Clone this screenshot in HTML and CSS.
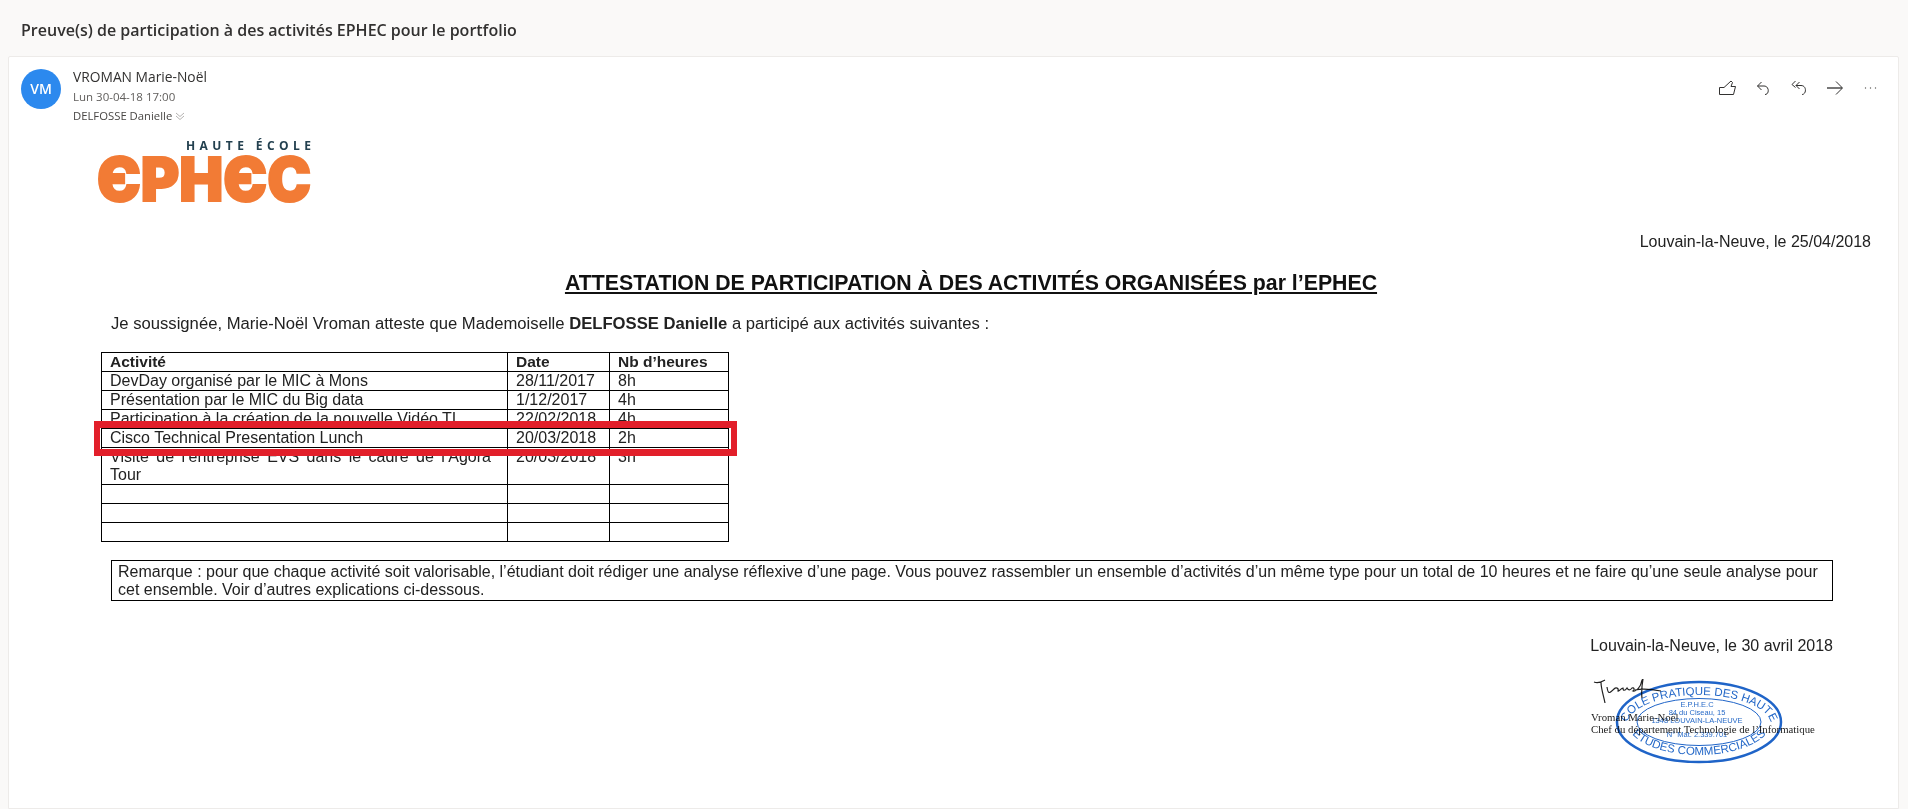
FILE: index.html
```html
<!DOCTYPE html>
<html lang="fr">
<head>
<meta charset="utf-8">
<title>Preuve(s) de participation</title>
<link rel="stylesheet" href="styles.css">
</head>
<body>
<h1 class="subject">Preuve(s) de participation à des activités EPHEC pour le portfolio</h1>
<main class="card">
  <header class="mail-head">
    <div class="avatar">VM</div>
    <div class="meta">
      <div class="sender">VROMAN Marie-Noël</div>
      <div class="date">Lun 30-04-18 17:00</div>
      <div class="to">DELFOSSE Danielle
        <svg class="chev" viewBox="0 0 10 10" width="10" height="10"><path d="M1 2l4 3.500L9 2M1 5l4 3.500L9 5"/></svg>
      </div>
    </div>
    <div class="actions">
      <svg class="icon" viewBox="0 0 17 16" width="17" height="16"><path d="M.5 7.500H5L12 1l1.500 1.500-1.500 4h4.500L14.500 14.500H.5z"/></svg>
      <svg class="icon" viewBox="0 0 14 16" width="14" height="16"><path d="M5.500 2L1.500 6l4 4M1.500 6h6.500c5.500 0 5.500 8.500 1 8.500"/></svg>
      <svg class="icon" viewBox="0 0 17 16" width="17" height="16"><path d="M5.500 1L2 4.500 5.500 7.500M9.500 2L6 5.500 9.500 9M6 5.500h5c6 0 5.500 9 1 9"/></svg>
      <svg class="icon" viewBox="0 0 16 16" width="16" height="16"><path class="fwd-line" d="M0 8h15"/><path d="M9 1.500L15.500 8 9 14.500"/></svg>
      <svg class="icon" viewBox="0 0 14 16" width="14" height="16"><circle cx="2.500" cy="8" r=".7"/><circle cx="7.500" cy="8" r=".7"/><circle cx="12.500" cy="8" r=".7"/></svg>
    </div>
  </header>

  <article class="doc">
    <svg class="logo" viewBox="0 0 216 66" width="216" height="66" role="img" aria-label="Haute École EPHEC">
      <text class="logo-top" x="89" y="10" textLength="125" lengthAdjust="spacing">HAUTE ÉCOLE</text>
      <text class="logo-main" x="0" y="61" textLength="214" lengthAdjust="spacingAndGlyphs">ЄPHЄC</text>
    </svg>

    <p class="place-top">Louvain-la-Neuve, le 25/04/2018</p>
    <h2 class="title"><u>ATTESTATION DE PARTICIPATION À DES ACTIVITÉS ORGANISÉES par l’EPHEC</u></h2>
    <p class="intro">Je soussignée, Marie-Noël Vroman atteste que Mademoiselle <b>DELFOSSE Danielle</b> a participé aux activités suivantes :</p>

    <div class="table-wrap">
      <table class="activities">
        <colgroup><col class="c1"><col class="c2"><col class="c3"></colgroup>
        <tr class="head"><th>Activité</th><th>Date</th><th>Nb d’heures</th></tr>
        <tr><td>DevDay organisé par le MIC à Mons</td><td>28/11/2017</td><td>8h</td></tr>
        <tr><td>Présentation par le MIC du Big data</td><td>1/12/2017</td><td>4h</td></tr>
        <tr><td>Participation à la création de la nouvelle Vidéo TI</td><td>22/02/2018</td><td>4h</td></tr>
        <tr><td>Cisco Technical Presentation Lunch</td><td>20/03/2018</td><td>2h</td></tr>
        <tr><td class="justify">Visite de l’entreprise EVS dans le cadre de l’Agora Tour</td><td>20/03/2018</td><td>3h</td></tr>
        <tr><td></td><td></td><td></td></tr>
        <tr><td></td><td></td><td></td></tr>
        <tr><td></td><td></td><td></td></tr>
      </table>
      <div class="highlight"></div>
    </div>

    <p class="remark">Remarque : pour que chaque activité soit valorisable, l’étudiant doit rédiger une analyse réflexive d’une page. Vous pouvez rassembler un ensemble d’activités d’un même type pour un total de 10 heures et ne faire qu’une seule analyse pour cet ensemble. Voir d’autres explications ci-dessous.</p>

    <p class="place-bottom">Louvain-la-Neuve, le 30 avril 2018</p>

    <div class="sign">
      <p class="sign-name">Vroman Marie-Noël<br>Chef du département Technologie de l’Informatique</p>
      <svg class="signature" viewBox="0 0 70 28" width="70" height="28">
        <path d="M1 3C6 5 10 2 12 1M8 3C8 10 11 18 12 24M14 8C15 15 16 15 21 10C23 8 26 9 25 12C26 13 28 9 30 9C30 12 32 12 34 9C35 11 37 12 39 9C41 8 42 11 40 12C43 13 45 10 47 7C49 4 48 1 50 0C49 6 48 12 49 19M42 11C50 9 58 10 68 12"/>
      </svg>
      <svg class="stamp" viewBox="0 0 170 86" width="170" height="86">
        <defs>
          <path id="arcTop" d="M13 46A72 30 0 0 1 157 46"/>
          <path id="arcBot" d="M13 43A72 33 0 0 0 157 43"/>
        </defs>
        <ellipse class="ring" cx="85" cy="43" rx="82" ry="40"/>
        <ellipse class="ring thin" cx="85" cy="43" rx="62" ry="23.500"/>
        <text class="stamp-big"><textPath href="#arcTop" startOffset="50%" text-anchor="middle">ECOLE PRATIQUE DES HAUTES</textPath></text>
        <text class="stamp-big"><textPath href="#arcBot" startOffset="50%" text-anchor="middle">ETUDES COMMERCIALES</textPath></text>
        <text class="stamp-small" x="83" y="28" text-anchor="middle">E.P.H.E.C</text>
        <text class="stamp-small" x="83" y="36" text-anchor="middle">84 du Ciseau, 15</text>
        <text class="stamp-small" x="83" y="44" text-anchor="middle">1348 LOUVAIN-LA-NEUVE</text>
        <text class="stamp-small" x="83" y="58" text-anchor="middle">N° Mat. 2.339.701</text>
      </svg>
    </div>
  </article>
</main>
</body>
</html>
```

FILE: styles.css
```css
* { box-sizing: border-box; }
html, body { height: 100%; margin: 0; overflow: hidden; }
body { background: #faf9f8; font-family: "Open Sans", "Liberation Sans", sans-serif; color: #323130; }

.subject {
  margin: 0;
  height: 56px;
  padding: 20px 0 0 21px;
  font-size: 16px;
  line-height: 20px;
  font-weight: 600;
}

.card {
  margin: 0 9px 0 8px;
  height: 753px;
  background: #fff;
  border: 1px solid #edebe9;
  border-radius: 2px 2px 0 0;
  color: #000;
  overflow: hidden;
}

.mail-head { display: flex; height: 83px; padding: 12px 21px 0 12px; }
.avatar {
  flex: none;
  width: 40px;
  height: 40px;
  border-radius: 50%;
  background: #2c89ee;
  color: #fff;
  font-size: 14px;
  font-weight: 600;
  line-height: 40px;
  text-align: center;
}
.meta { margin-left: 12px; color: #605e5c; font-weight: 400; }
.sender { margin-top: -2px; font-size: 13.800px; line-height: 20px; color: #323130; }
.date { font-size: 11.500px; line-height: 20px; }
.to { margin-top: -1px; font-size: 11.300px; line-height: 19px; color: #484644; }
.chev { fill: none; stroke: #a19f9d; stroke-width: .8; vertical-align: -1px; }

.actions { margin-left: auto; display: flex; align-items: flex-start; gap: 20px; padding-top: 11px; }
.icon { fill: none; stroke: #323130; stroke-width: 1; overflow: visible; }
.icon circle { fill: #605e5c; stroke: none; }
.fwd-line { stroke: #777; stroke-width: 2; }

.doc { font-family: "Liberation Sans", Arial, sans-serif; padding: 0 27px 0 0; color: #222; }
.doc p { margin: 0; }

.logo { display: block; margin-left: 88px; overflow: visible; }
.logo-top { font-family: "Open Sans", sans-serif; font-weight: 700; font-size: 12px; fill: #23404f; }
.logo-main {
  font-family: "Inter", "DejaVu Sans", sans-serif;
  font-weight: 900;
  font-size: 60px;
  fill: #f27b35;
  stroke: #f27b35;
  stroke-width: 2;
}

.doc .place-top { margin-top: 27px; text-align: right; font-size: 16px; line-height: 18px; }
.title { margin: 20px 0 0; padding-left: 62px; text-align: center; font-size: 21.300px; line-height: 24px; font-weight: 700; color: #111; }
.doc .intro { margin: 20px 0 0 102px; font-size: 16.650px; line-height: 18px; }

.table-wrap { position: relative; width: fit-content; margin: 19px 0 0 92px; }
.activities { border-collapse: collapse; table-layout: fixed; width: 627px; font-size: 16px; line-height: 18px; }
.c1 { width: 406px; } .c2 { width: 102px; } .c3 { width: 119px; }
.activities tr { height: 19px; }
.activities th, .activities td { border: 1.300px solid #000; padding: 0 7px 0 8px; text-align: left; vertical-align: top; }
.activities th { font-weight: 700; font-size: 15.500px; }
.activities .justify { text-align: justify; padding-right: 16px; }
.highlight {
  position: absolute;
  left: -7px; right: -8px;
  top: 69px; height: 35px;
  border: solid #e21f2a;
  border-width: 7px 6px;
}

.doc .remark {
  margin: 18px 38px 0 102px;
  padding: 2px 2px 0 6px;
  border: 1.300px solid #000;
  font-size: 16px;
  line-height: 17.500px;
  height: 41px;
  overflow: hidden;
}

.doc .place-bottom { margin: 36px 38px 0 0; text-align: right; font-size: 16px; line-height: 18px; }

.sign { position: relative; margin: 16px 0 0 1582px; height: 110px; }
.doc .sign-name {
  padding-top: 40px;
  font-family: "Liberation Serif", serif;
  font-size: 10.750px;
  line-height: 12px;
  white-space: nowrap;
  color: #222;
}
.stamp { position: absolute; left: 23px; top: 8px; filter: blur(.4px); mix-blend-mode: multiply; overflow: visible; }
.ring { fill: none; stroke: #1f64c8; stroke-width: 2.500; }
.ring.thin { stroke-width: 1; }
.stamp-big { font-family: "Liberation Sans", sans-serif; font-size: 11.500px; fill: #2468c8; }
.stamp-small { font-family: "Liberation Sans", sans-serif; font-size: 7.500px; fill: #2a6cc8; }
.signature { position: absolute; left: 2px; top: 8px; fill: none; stroke: #222; stroke-width: 1.200; }
```
